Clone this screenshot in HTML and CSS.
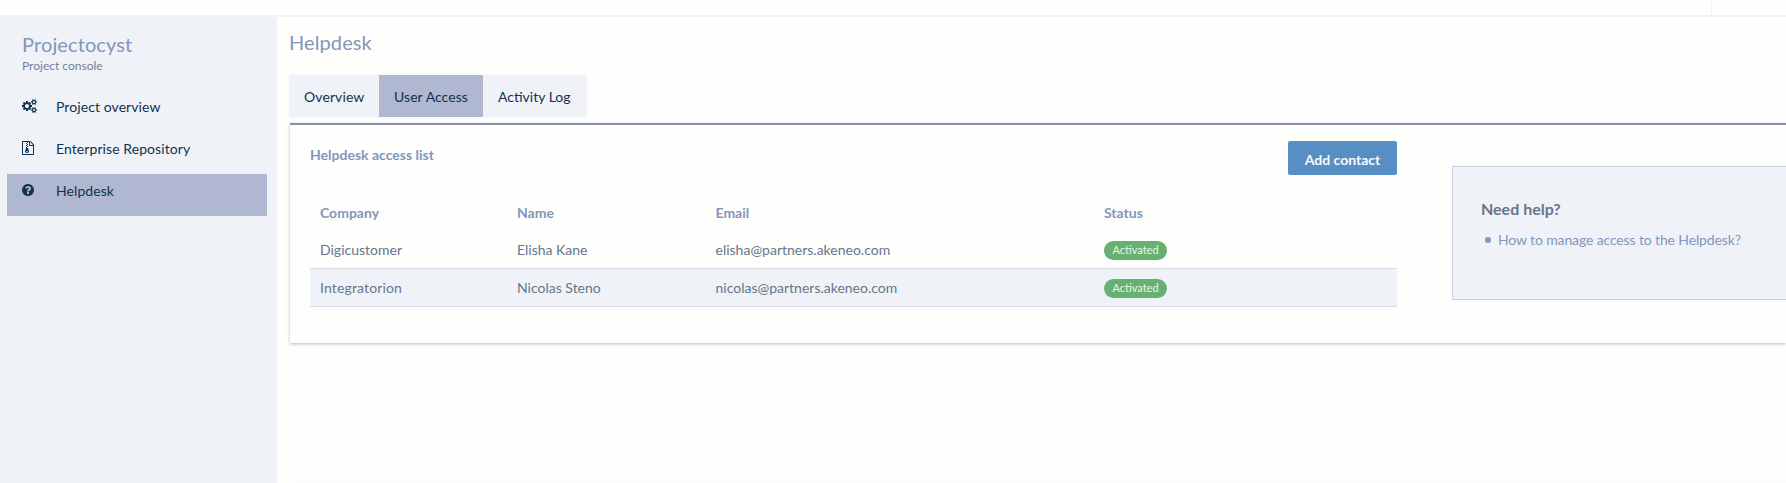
FILE: index.html
```html
<!DOCTYPE html>
<html lang="en">
<head>
<meta charset="utf-8">
<title>Helpdesk</title>
<link rel="stylesheet" href="styles.css">
</head>
<body>
<header class="topbar"><div class="topbar-user"></div></header>
<div class="layout">
  <aside class="sidebar">
    <h2 class="project-name">Projectocyst</h2>
    <p class="project-sub">Project console</p>
    <nav class="menu">
      <a class="menu-item">
        <span class="menu-icon"><svg width="15" height="14" viewBox="-64 0 1920 1792"><path d="M832 896q0-106-75-181t-181-75-181 75-75 181 75 181 181 75 181-75 75-181zm768 512q0-52-38-90t-90-38-90 38-38 90q0 53 37.5 90.5t90.5 37.5 90.5-37.5 37.5-90.5zm0-1024q0-52-38-90t-90-38-90 38-38 90q0 53 37.5 90.5t90.5 37.5 90.5-37.5 37.5-90.5zm-384 421v185q0 10-7 19.5t-16 10.5l-155 24q-11 35-32 76 34 48 90 115 7 11 7 20 0 12-7 19-23 30-82.5 89.5t-78.5 59.5q-11 0-21-7l-115-90q-37 19-77 31-11 108-23 155-7 24-30 24h-186q-11 0-20-7.5t-10-17.5l-23-153q-34-10-75-31l-118 89q-7 7-20 7-11 0-21-8-144-133-144-160 0-9 7-19 10-14 41-53t47-61q-23-44-35-82l-152-24q-10-1-17-9.5t-7-19.5v-185q0-10 7-19.5t16-10.5l155-24q11-35 32-76-34-48-90-115-7-11-7-20 0-12 7-20 22-30 82-89t79-59q11 0 21 7l115 90q34-18 77-32 11-108 23-154 7-24 30-24h186q11 0 20 7.5t10 17.5l23 153q34 10 75 31l118-89q8-7 20-7 11 0 21 8 144 133 144 160 0 8-7 19-12 16-42 54t-45 60q23 48 34 82l152 23q10 2 17 10.5t7 19.5zm640 533v140q0 16-149 31-12 27-30 52 51 113 51 138 0 4-4 7-122 71-124 71-8 0-46-47t-52-68q-20 2-30 2t-30-2q-14 21-52 68t-46 47q-2 0-124-71-4-3-4-7 0-25 51-138-18-25-30-52-149-15-149-31v-140q0-16 149-31 13-29 30-52-51-113-51-138 0-4 4-7 4-2 35-20t59-34 30-16q8 0 46 46.5t52 67.5q20-2 30-2t30 2q51-71 92-112l6-2q4 0 124 70 4 3 4 7 0 25-51 138 17 23 30 52 149 15 149 31zm0-1024v140q0 16-149 31-12 27-30 52 51 113 51 138 0 4-4 7-122 71-124 71-8 0-46-47t-52-68q-20 2-30 2t-30-2q-14 21-52 68t-46 47q-2 0-124-71-4-3-4-7 0-25 51-138-18-25-30-52-149-15-149-31v-140q0-16 149-31 13-29 30-52-51-113-51-138 0-4 4-7 4-2 35-20t59-34 30-16q8 0 46 46.5t52 67.5q20-2 30-2t30 2q51-71 92-112l6-2q4 0 124 70 4 3 4 7 0 25-51 138 17 23 30 52 149 15 149 31z"/></svg></span>
        <span>Project overview</span>
      </a>
      <a class="menu-item">
        <span class="menu-icon"><svg width="12" height="14" viewBox="128 0 1536 1792"><path d="M768 384v-128h-128v128h128zm128 128v-128h-128v128h128zm-128 128v-128h-128v128h128zm128 128v-128h-128v128h128zm700-388q28 28 48 76t20 88v1152q0 40-28 68t-68 28h-1344q-40 0-68-28t-28-68v-1600q0-40 28-68t68-28h896q40 0 88 20t76 48zm-444-244v376h376q-10-29-22-41l-313-313q-12-12-41-22zm384 1528v-1024h-416q-40 0-68-28t-28-68v-416h-128v128h-128v-128h-512v1536h1280zm-627-721l107 349q8 27 8 52 0 83-72.5 137.5t-183.5 54.5-183.5-54.5-72.5-137.5q0-25 8-52 21-63 120-396v-128h128v128h79q22 0 39 13t23 34zm-141 465q53 0 90.5-19t37.5-45-37.5-45-90.5-19-90.5 19-37.5 45 37.5 45 90.5 19z"/></svg></span>
        <span>Enterprise Repository</span>
      </a>
      <a class="menu-item active">
        <span class="menu-icon"><svg width="12" height="14" viewBox="128 0 1536 1792"><path d="M1024 1376v-192q0-14-9-23t-23-9h-192q-14 0-23 9t-9 23v192q0 14 9 23t23 9h192q14 0 23-9t9-23zm256-672q0-88-55.5-163t-138.5-116-170-41q-243 0-371 213-15 24 8 42l132 100q7 6 19 6 16 0 25-12 53-68 86-92 34-24 86-24 48 0 85.5 26t37.5 59q0 38-20 61t-68 45q-63 28-115.5 86.5t-52.5 125.5v36q0 14 9 23t23 9h192q14 0 23-9t9-23q0-19 21.5-49.5t54.5-49.5q32-18 49-28.5t46-35 44.5-48 28-60.5 12.5-81zm384 192q0 209-103 385.5t-279.5 279.5-385.5 103-385.5-103-279.5-279.5-103-385.5 103-385.5 279.5-279.5 385.5-103 385.5 103 279.5 279.5 103 385.5z"/></svg></span>
        <span>Helpdesk</span>
      </a>
    </nav>
  </aside>
  <main class="content">
    <h1 class="page-title">Helpdesk</h1>
    <div class="tabs">
      <a class="tab tab-overview">Overview</a>
      <a class="tab tab-access active">User Access</a>
      <a class="tab tab-log">Activity Log</a>
    </div>
    <section class="card">
      <div class="access">
        <div class="access-head">
          <h3 class="access-title">Helpdesk access list</h3>
          <button class="btn">Add contact</button>
        </div>
        <div class="table">
          <div class="row head"><span>Company</span><span>Name</span><span>Email</span><span>Status</span></div>
          <div class="row"><span>Digicustomer</span><span>Elisha Kane</span><span>elisha@partners.akeneo.com</span><span class="cell-status"><b class="pill">Activated</b></span></div>
          <div class="row alt"><span class="company-wide">Integratorion</span><span>Nicolas Steno</span><span>nicolas@partners.akeneo.com</span><span class="cell-status"><b class="pill">Activated</b></span></div>
        </div>
      </div>
      <aside class="help">
        <h4 class="help-title">Need help?</h4>
        <div class="help-item"><i class="bullet"></i><a>How to manage access to the Helpdesk?</a></div>
      </aside>
    </section>
    <footer class="footer"></footer>
  </main>
</div>
</body>
</html>
```
FILE: styles.css
```css
* { box-sizing: border-box; margin: 0; padding: 0; }
body {
  height: 483px;
  overflow: hidden;
  display: flex;
  flex-direction: column;
  background: #fefefd;
  color: #67768a;
  font: 14px/20px Lato, sans-serif;
}
.topbar {
  flex: none;
  height: 17px;
  display: flex;
  justify-content: flex-end;
  border-bottom: 2px solid #eff2f8;
}
.topbar-user { width: 75px; border-left: 1px solid #eff2f8; }
.layout { flex: 1; display: flex; min-height: 0; }
.sidebar { flex: none; width: 277px; padding: 15px 10px 0 7px; background: #eff3f8; }
.project-name { padding-left: 15px; font-size: 20px; line-height: 24px; font-weight: 400; letter-spacing: .12px; color: #8396bb; }
.project-sub { margin-top: 1px; padding-left: 15px; font-size: 12px; line-height: 18px; color: #728095; }
.menu { margin-top: 15px; }
.menu-item { display: flex; height: 42px; padding: 7px 15px; color: #11324d; letter-spacing: .08px; }
.menu-item.active { background: #afb8d0; }
.menu-icon { flex: none; width: 34px; padding-top: 2px; }
.menu-icon svg { display: block; fill: #11324d; }
.content { flex: 1; display: flex; flex-direction: column; min-width: 0; padding: 13px 0 0 12px; }
.page-title { height: 45px; font-size: 20px; line-height: 24px; font-weight: 400; letter-spacing: .1px; color: #8396bb; }
.tabs { display: flex; width: 297px; height: 42px; color: #11324d; box-shadow: 1px 0 2px #f3f0f7; }
.tab { height: 42px; padding: 12px 0 0 15px; background: #eff3f8; }
.tab.active { background: #afb8d0; }
.tab-overview { width: 90px; letter-spacing: .1px; }
.tab-access { width: 104px; letter-spacing: .06px; }
.tab-log { width: 103px; }
.card {
  display: flex;
  align-items: flex-start;
  gap: 55px;
  height: 220px;
  margin: 6px 0 0 1px;
  padding: 16px 0 0 20px;
  border-top: 2px solid #8490ae;
  box-shadow: 0 1px 3px rgba(70, 76, 100, .38);
}
.access { width: 1087px; }
.access-head { display: flex; justify-content: space-between; height: 61px; }
.access-title { padding-top: 4px; font-size: 14px; font-weight: 700; color: #8396bb; }
.btn {
  width: 109px;
  height: 34px;
  padding-top: 3px;
  border: 0;
  border-radius: 2px;
  background: #578fc4;
  color: #f7fafc;
  font: 700 14px/20px Lato, sans-serif;
}
.row {
  display: grid;
  grid-template-columns: 197px 198.5px 388.5px 1fr;
  height: 38px;
  padding: 9px 10px 0;
  border-bottom: 1px solid #d7dce3;
}
.row.head { height: 29px; padding-top: 1px; border: 0; font-weight: 700; color: #8396bb; }
.row.alt { background: #eff3f8; }
.company-wide { letter-spacing: .14px; }
.cell-status { display: flex; padding-top: 1px; }
.pill {
  width: 63px;
  height: 19px;
  border-radius: 10px;
  background: #66b072;
  color: #e8f6e6;
  font-size: 11px;
  line-height: 18px;
  font-weight: 400;
  text-align: center;
}
.help {
  flex: 1;
  height: 134px;
  margin-top: 25px;
  padding: 32px 0 0 28px;
  border: 1px solid #c8d1e2;
  border-right: 0;
  background: #eff3f8;
}
.help-title { font-size: 16px; line-height: 20px; font-weight: 700; }
.help-item { display: flex; align-items: center; margin-top: 11px; padding-left: 4px; gap: 7px; letter-spacing: -.13px; color: #8396bb; }
.bullet { width: 6px; height: 6px; border-radius: 50%; background: #8396bb; }
.footer { height: 2px; margin-top: auto; background: #fcfcfd; }
```
